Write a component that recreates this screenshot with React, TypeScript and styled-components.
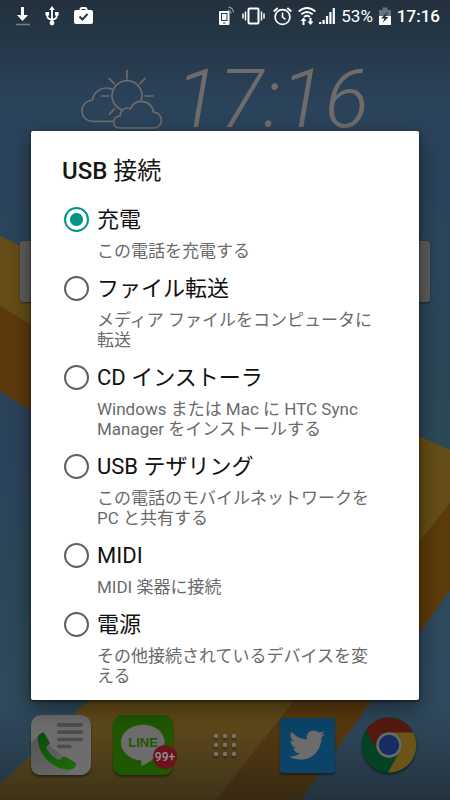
import React, { useState } from 'react';
import styled, { createGlobalStyle } from 'styled-components';
import { FaTwitter } from 'react-icons/fa';

const GlobalStyle = createGlobalStyle`
  *, *::before, *::after { box-sizing: border-box; }
  body {
    margin: 0;
    background: #2b4356;
    font-family: Roboto, "Noto Sans CJK JP", sans-serif;
  }
  button { padding: 0; border: 0; background: none; color: inherit; font: inherit; cursor: pointer; }
`;

const Screen = styled.div`
  position: relative;
  display: flex;
  flex-direction: column;
  min-height: 100vh;
  isolation: isolate;
  overflow: hidden;
`;

const Wallpaper = styled.svg`
  position: absolute;
  inset: 0;
  z-index: -1;
  width: 100%;
  height: 100%;
`;

const StatusBar = styled.header`
  display: flex;
  justify-content: space-between;
  align-items: center;
  height: 32px;
  padding: 0 10px 0 15px;
  color: #fff;
`;

const StatusGroup = styled.div<{ $gap: number }>`
  display: flex;
  align-items: center;
  gap: ${(p) => p.$gap}px;
  svg { display: block; flex: none; }
`;

const StatusText = styled.span<{ $strong?: boolean }>`
  font-size: 17px;
  line-height: 20px;
  font-weight: ${(p) => (p.$strong ? 500 : 400)};
`;

const ClockWidget = styled.section`
  display: flex;
  justify-content: center;
  align-items: flex-start;
  gap: 12px;
  height: 209px;
  padding-top: 37px;
  svg { flex: none; }
`;

const Clock = styled.time`
  font-size: 82px;
  line-height: 60px;
  font-weight: 300;
  font-style: italic;
  color: #6e6c6a;
`;

const SearchCard = styled.div`
  height: 61px;
  margin: 0 20px;
  border-radius: 3px;
  background: #5d5d5d;
  box-shadow: 0 1px 2px rgba(0, 0, 0, 0.4);
`;

const Dock = styled.nav`
  display: grid;
  grid-template-columns: repeat(5, 1fr);
  place-items: center;
  margin-top: auto;
  padding: 0 20px 25px;
`;

const AppButton = styled.button`
  position: relative;
  display: grid;
  place-items: center;
  width: 60px;
  height: 60px;
  svg { display: block; overflow: visible; filter: drop-shadow(0 2px 1px rgba(0, 0, 0, 0.4)); }
`;

const TwitterTile = styled.span`
  display: grid;
  place-items: center;
  width: 55px;
  height: 55px;
  border-radius: 3px;
  background: #0b4468;
  color: #6c6c6c;
  box-shadow: 0 2px 2px rgba(0, 0, 0, 0.4);
  svg { filter: none; }
`;

const LineWord = styled.span`
  position: absolute;
  inset: 20px 0 auto;
  font: bold 13px/16px "Liberation Sans", sans-serif;
  color: #1f5800;
`;

const Badge = styled.span`
  position: absolute;
  right: -4px;
  bottom: 6px;
  width: 24px;
  height: 24px;
  border-radius: 50%;
  background: #6c121c;
  color: #929292;
  font-size: 12px;
  line-height: 24px;
  font-weight: 500;
  text-align: center;
`;

const Overlay = styled.div`
  position: absolute;
  inset: 0;
  display: grid;
  align-items: center;
  padding: 31px 31px 0;
`;

const Dialog = styled.form`
  padding: 24px 31px 3px;
  border-radius: 2px;
  background: #fff;
  box-shadow: 0 8px 22px rgba(0, 0, 0, 0.45), 0 1px 3px rgba(0, 0, 0, 0.6);
`;

const Title = styled.h1`
  margin: 0 0 16px;
  font-size: 24px;
  line-height: 32px;
  font-weight: 400;
  color: #161616;
  b { font-weight: 500; }
`;

const Options = styled.div`
  display: grid;
`;

const Option = styled.label`
  display: grid;
  grid-template-columns: 25px 1fr;
  column-gap: 8px;
  padding: 0 8px 11px 2px;
  cursor: pointer;
`;

const Radio = styled.input`
  appearance: none;
  width: 25px;
  height: 25px;
  margin: 4px 0 0;
  border: 2px solid #606060;
  border-radius: 50%;
  cursor: pointer;
  &:checked {
    border-color: #009688;
    background: radial-gradient(circle, #009688 6px, transparent 7px);
  }
`;

const OptionName = styled.span`
  display: block;
  margin-bottom: 4px;
  font-size: 22px;
  line-height: 34px;
  color: #111;
`;

const OptionNote = styled.span`
  display: block;
  font-size: 17px;
  line-height: 20px;
  color: #6a6a6a;
`;

const options = [
  { id: 'charge', name: '充電', note: 'この電話を充電する' },
  { id: 'files', name: 'ファイル転送', note: 'メディア ファイルをコンピュータに転送' },
  { id: 'cd', name: 'CD インストーラ', note: 'Windows または Mac に HTC Sync Manager をインストールする' },
  { id: 'tether', name: 'USB テザリング', note: 'この電話のモバイルネットワークを PC と共有する' },
  { id: 'midi', name: 'MIDI', note: 'MIDI 楽器に接続' },
  { id: 'power', name: '電源', note: 'その他接続されているデバイスを変える' },
];

const Background = () => (
  <Wallpaper viewBox="0 0 450 800" preserveAspectRatio="none" aria-hidden="true">
    <defs>
      <linearGradient id="sky" x1="0" y1="0" x2="0" y2="1">
        <stop offset="0" stopColor="#2a4259" />
        <stop offset="0.25" stopColor="#2b445c" />
        <stop offset="0.5" stopColor="#2c4856" />
        <stop offset="1" stopColor="#304b60" />
      </linearGradient>
      <linearGradient id="shade" x1="0" y1="0" x2="0" y2="1">
        <stop offset="0" stopColor="#1c2428" stopOpacity="0.6" />
        <stop offset="0.13" stopColor="#1c2428" stopOpacity="0" />
        <stop offset="0.88" stopColor="#1c2428" stopOpacity="0" />
        <stop offset="1" stopColor="#14181a" stopOpacity="0.5" />
      </linearGradient>
    </defs>
    <rect width="450" height="800" fill="url(#sky)" />
    <path d="M0 236 L419 436 L450 450 V503 L216 800 H0 V784 L200 595 L0 306Z" fill="#654d17" />
    <path d="M0 306 L240 452 V550 L0 391Z" fill="#5c3a0e" />
    <path d="M0 391 L250 555 L88 701 L0 784Z" fill="url(#sky)" />
    <path d="M450 503 L216 800 H301 L450 590Z" fill="#5c3b0c" />
    <rect width="450" height="800" fill="url(#shade)" />
  </Wallpaper>
);

const DownloadIcon = () => (
  <svg width="15" height="20" viewBox="0 0 15 20">
    <path d="M6 1h3v8h4l-5.500 6L2 9h4z" fill="#fff" />
    <path d="M1 18.500h14" stroke="#71808a" strokeWidth="1.500" />
  </svg>
);

const UsbIcon = () => (
  <svg width="14" height="20" viewBox="0 0 14 20" fill="none" stroke="#fff" strokeWidth="1.800">
    <path d="M7 3v14M2.300 8v2.500q0 2 4.700 3.500M11.700 8v2.500q0 2-4.700 3.500" />
    <path d="M7 0l2.800 4H4.200zM.5 6h3.600v3.600H.5zM10 6h3.600v3.600H10z" fill="#fff" stroke="none" />
    <circle cx="7" cy="17" r="2.400" fill="#fff" stroke="none" />
  </svg>
);

const BagIcon = () => (
  <svg width="19" height="20" viewBox="0 0 19 20">
    <path d="M6.500 6V3.500q0-1.500 1.500-1.500h3q1.500 0 1.500 1.500V6" fill="none" stroke="#fff" strokeWidth="2" />
    <rect x="0" y="4" width="19" height="14" rx="2" fill="#fff" />
    <path d="M5.500 10.500l3 3 5-5.500" fill="none" stroke="#243746" strokeWidth="2" />
  </svg>
);

const PhoneSignalIcon = () => (
  <svg width="15" height="20" viewBox="0 0 15 20">
    <rect x="0" y="5" width="10.500" height="14" rx="1.200" fill="#fff" />
    <path d="M2 7h6.500v8H2z" fill="#263b4b" />
    <path d="M3 8h4.500v6H3z" fill="#f4f6f7" />
    <path d="M4 17h2.500" stroke="#263b4b" />
    <path d="M9 4q2.500 0 3 3.500M9.500 1.200q4.500 .5 5 5.300" fill="none" stroke="#8b98a1" strokeWidth="1.200" />
  </svg>
);

const VibrateIcon = () => (
  <svg width="23" height="20" viewBox="0 0 23 20" fill="none" stroke="#fff">
    <rect x="6.500" y="2.500" width="10" height="15" rx="1" strokeWidth="2" />
    <path d="M3.500 5.500v9M19.500 5.500v9" strokeWidth="1.500" />
    <path d="M1 7.500v5M22 7.500v5" strokeWidth="1.500" />
  </svg>
);

const AlarmIcon = () => (
  <svg width="19" height="20" viewBox="0 0 19 20" fill="none" stroke="#fff">
    <circle cx="9.500" cy="11" r="7.400" strokeWidth="1.700" />
    <path d="M9.500 6.500V11l3 2.500" strokeWidth="1.600" />
    <path d="M.7 5.500l4-3.500M18.300 5.500l-4-3.500" strokeWidth="2" />
  </svg>
);

const WifiIcon = () => (
  <svg width="18" height="20" viewBox="0 0 18 20" fill="none" stroke="#fff" strokeWidth="1.800">
    <path d="M.7 5.500Q9-1.500 17.300 5.500M3.300 8.300q5.700-4.600 11.400 0M6 11q3-2.400 6 0" />
    <path d="M5.500 11.500l3 3.500H6.500v4h-2v-4h-2zM12.500 19l3-3.500h-2v-3.500h-2v3.500h-2z" fill="#fff" stroke="none" />
  </svg>
);

const SignalIcon = () => (
  <svg width="16" height="20" viewBox="0 0 16 20" stroke="#fff" strokeWidth="2.200">
    <path d="M1.200 18v-2M4.600 18v-4M8 18v-8M11.400 18V6M14.800 18V2" />
  </svg>
);

const BatteryIcon = () => (
  <svg width="12" height="20" viewBox="0 0 12 20">
    <path d="M3.500 1.500h5V4H12v7H0V4h3.500z" fill="#64727c" />
    <path d="M0 10h12v9H0z" fill="#fff" />
    <path d="M9 5.500L2 12.500h3.500L3.500 17l6-6H6.500z" fill="#203340" />
  </svg>
);

const WeatherIcon = () => (
  <svg width="82" height="60" viewBox="240 205 246 180" fill="none" stroke="#6e6c6a" strokeWidth="5" strokeLinecap="round" aria-hidden="true">
    <path d="M378 210v24M324 233l16 16M432 233l-15 16M301 286h24M432 286h24M325 341l15-16" />
    <path d="M362 327A45 45 0 1 1 421 298" />
    <path d="M333 266C310 255 280 268 274 298C255 300 243 313 243 330C243 350 258 362 276 362H337" />
    <path d="M358 382C345 382 338 374 338 363C338 354 346 346 358 346C356 332 368 322 380 322C384 322 386 323 389 324C394 310 406 302 420 302C440 302 456 316 457 334C471 335 481 345 481 358C481 372 472 382 458 382Z" />
  </svg>
);

const PhoneAppIcon = () => (
  <svg width="60" height="60" viewBox="94 346 180 180">
    <defs>
      <linearGradient id="handset" x1="0" y1="0" x2="0.6" y2="1">
        <stop offset="0" stopColor="#0b4a0b" />
        <stop offset="1" stopColor="#1c6709" />
      </linearGradient>
      <linearGradient id="cast" x1="0" y1="0" x2="0.6" y2="1">
        <stop offset="0" stopColor="#545454" />
        <stop offset="1" stopColor="#666" />
      </linearGradient>
    </defs>
    <rect x="94" y="346" width="180" height="180" rx="32" fill="#6d6d6d" />
    <path d="M113 413L94 430V494Q94 526 126 526H200L228 496Z" fill="url(#cast)" />
    <path d="M177 375.500H245M177 397.500H245M177 419.500H245M177 440.500H211" stroke="#4c4c4c" strokeWidth="11" strokeLinecap="round" />
    <path d="M114 410Q122 399 132 398L151 429Q151 434 141 440Q138 446 145 454Q160 474 176 480Q184 482 189 473Q193 470 199 472L230 491Q229 503 218 508Q190 516 158 494Q113 461 114 410Z" fill="url(#handset)" />
  </svg>
);

const LineAppIcon = () => (
  <svg width="60" height="60" viewBox="340 346 180 180">
    <rect x="340" y="346" width="180" height="180" rx="28" fill="#1f5800" />
    <path d="M430 375C466 375 495 398 495 428C495 452 463 481 425 500C423 497 428 485 423 482C389 480 364 456 364 428C364 398 394 375 430 375Z" fill="#6c6c6c" />
  </svg>
);

const AppsIcon = () => (
  <svg width="26" height="26" viewBox="0 0 26 26" fill="#77736b">
    {[4, 13, 22].map((y) => [4, 13, 22].map((x) => <circle key={`${x}-${y}`} cx={x} cy={y} r="2.200" />))}
  </svg>
);

const ChromeIcon = () => (
  <svg width="56" height="56" viewBox="0 0 56 56">
    <circle cx="28" cy="28" r="27.500" fill="#044224" />
    <path d="M5 13A27.500 27.500 0 0 1 52.300 15.500H28A12.500 12.500 0 0 0 16.500 34Z" fill="#57190f" />
    <path d="M28 15.500H52.300A27.500 27.500 0 0 1 27 55.500L39 34A12.500 12.500 0 0 0 28 15.500Z" fill="#6c5419" />
    <circle cx="28" cy="28" r="12.700" fill="#6a6a6a" />
    <circle cx="28" cy="28" r="10.200" fill="#182c62" />
  </svg>
);

export default function App() {
  const [selected, setSelected] = useState('charge');
  return (
    <>
      <GlobalStyle />
      <Screen>
        <Background />
        <StatusBar>
          <StatusGroup $gap={15}>
            <DownloadIcon />
            <UsbIcon />
            <BagIcon />
          </StatusGroup>
          <StatusGroup $gap={6}>
            <StatusGroup $gap={8}>
              <PhoneSignalIcon />
              <VibrateIcon />
              <AlarmIcon />
            </StatusGroup>
            <StatusGroup $gap={3}>
              <WifiIcon />
              <SignalIcon />
            </StatusGroup>
            <StatusText>53%</StatusText>
            <BatteryIcon />
            <StatusText $strong>17:16</StatusText>
          </StatusGroup>
        </StatusBar>
        <ClockWidget>
          <WeatherIcon />
          <Clock>17:16</Clock>
        </ClockWidget>
        <SearchCard />
        <Dock>
          <AppButton aria-label="電話"><PhoneAppIcon /></AppButton>
          <AppButton>
            <LineAppIcon />
            <LineWord>LINE</LineWord>
            <Badge>99+</Badge>
          </AppButton>
          <AppButton aria-label="アプリ"><AppsIcon /></AppButton>
          <AppButton aria-label="Twitter">
            <TwitterTile><FaTwitter size={36} /></TwitterTile>
          </AppButton>
          <AppButton aria-label="Chrome"><ChromeIcon /></AppButton>
        </Dock>
        <Overlay>
          <Dialog role="dialog" aria-labelledby="dialog-title">
            <Title id="dialog-title"><b>USB</b> 接続</Title>
            <Options role="radiogroup" aria-labelledby="dialog-title">
              {options.map((o) => (
                <Option key={o.id}>
                  <Radio
                    type="radio"
                    name="usb-mode"
                    value={o.id}
                    checked={selected === o.id}
                    onChange={() => setSelected(o.id)}
                  />
                  <span>
                    <OptionName>{o.name}</OptionName>
                    <OptionNote>{o.note}</OptionNote>
                  </span>
                </Option>
              ))}
            </Options>
          </Dialog>
        </Overlay>
      </Screen>
    </>
  );
}
